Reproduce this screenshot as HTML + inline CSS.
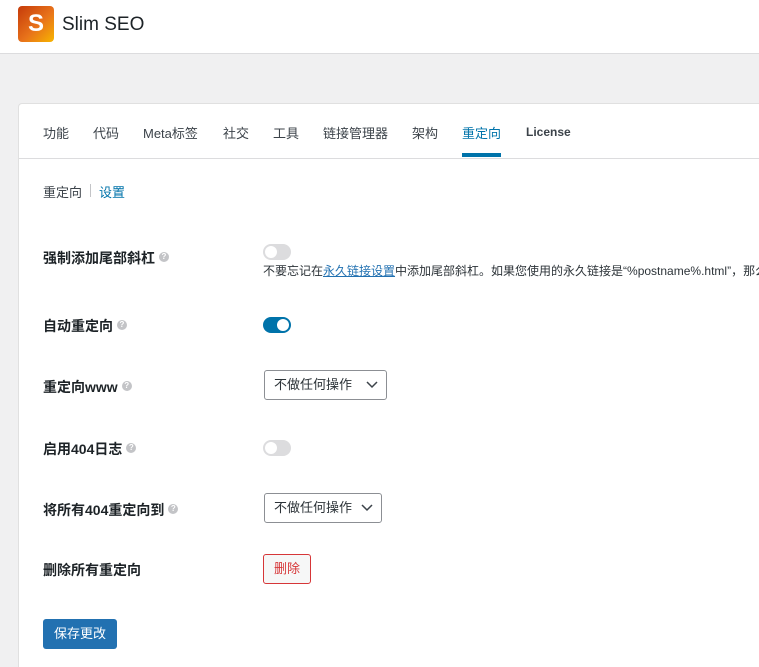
<!DOCTYPE html><html><head><meta charset="utf-8"><style>
*{margin:0;padding:0;box-sizing:border-box}
html,body{width:759px;height:667px;overflow:hidden}
body{background:#f0f0f1;font-family:"Liberation Sans","Noto Sans CJK SC",sans-serif;color:#1d2327;font-size:13px;position:relative}
.a{position:absolute;white-space:nowrap}
.hdr{left:0;top:0;width:759px;height:54px;background:#fff;border-bottom:1px solid #dcdcde}
.logo{left:18px;top:6px;width:36px;height:36px;border-radius:4px;background:linear-gradient(135deg,#c53a0a,#e8731a 55%,#f7b500);color:#fff;font-weight:bold;font-size:24px;text-align:center;line-height:36px}
.card{left:18px;top:103px;width:741px;height:564px;background:#fff;border:1px solid #e0e0e0;border-bottom:none;border-right:none;border-radius:4px 0 0 0}
.tab{top:123px;font-size:13px;color:#3c434a}
.lbl{left:43px;font-weight:bold;font-size:14px;color:#1d2327}
.q{display:inline-block;width:10px;height:10px;border-radius:50%;background:#c3c4c7;color:#fff;font-size:8px;text-align:center;line-height:10px;vertical-align:4px;margin-left:4px}
.tg{width:28px;height:16px;border-radius:8px;background:#dcdcde}
.tg::after{content:"";position:absolute;top:2px;left:2px;width:12px;height:12px;border-radius:50%;background:#fff}
.tg.on{background:#0073aa}.tg.on::after{left:14px}
.sel{height:30px;border:1px solid #8c8f94;border-radius:3px;padding:0 0 0 9px;line-height:28px;font-size:13px;color:#2c3338;background:#fff}
.sel svg{position:absolute;right:8px;top:10px}
</style></head><body>
<div class="a hdr"></div>
<div class="a logo">S</div>
<div class="a" style="left:62px;top:14px;font-size:19px;color:#1d2327">Slim SEO</div>
<div class="a card"></div>
<div class="a tab" style="left:43px">功能</div>
<div class="a tab" style="left:93px">代码</div>
<div class="a tab" style="left:143px">Meta标签</div>
<div class="a tab" style="left:223px">社交</div>
<div class="a tab" style="left:273px">工具</div>
<div class="a tab" style="left:323px">链接管理器</div>
<div class="a tab" style="left:412px">架构</div>
<div class="a tab" style="left:462px;color:#0073aa">重定向</div>
<div class="a tab" style="left:526px;font-weight:bold;font-size:12px;top:125px">License</div>
<div class="a" style="left:462px;top:153px;width:39px;height:4px;background:#0073aa"></div>
<div class="a" style="left:19px;top:158px;width:740px;height:1px;background:#dcdcde"></div>
<div class="a" style="left:43px;top:182px;color:#3c434a">重定向</div>
<div class="a" style="left:90px;top:184px;width:1px;height:13px;background:#c3c4c7"></div>
<div class="a" style="left:99px;top:182px;color:#0073aa">设置</div>
<div class="a lbl" style="top:248px">强制添加尾部斜杠<span class="q">?</span></div>
<div class="a tg" style="left:263px;top:244px"></div>
<div class="a" style="left:263px;top:262px;font-size:12px;color:#2c3338">不要忘记在<span style="color:#2271b1;text-decoration:underline">永久链接设置</span>中添加尾部斜杠。如果您使用的永久链接是“%postname%.html”，那么只</div>
<div class="a lbl" style="top:316px">自动重定向<span class="q">?</span></div>
<div class="a tg on" style="left:263px;top:317px"></div>
<div class="a lbl" style="top:377px">重定向www<span class="q">?</span></div>
<div class="a sel" style="left:264px;top:370px;width:123px">不做任何操作<svg width="12" height="8"><path d="M1 1l5 5 5-5" stroke="#3c434a" stroke-width="1.5" fill="none"/></svg></div>
<div class="a lbl" style="top:439px">启用404日志<span class="q">?</span></div>
<div class="a tg" style="left:263px;top:440px"></div>
<div class="a lbl" style="top:500px">将所有404重定向到<span class="q">?</span></div>
<div class="a sel" style="left:264px;top:493px;width:118px">不做任何操作<svg width="12" height="8"><path d="M1 1l5 5 5-5" stroke="#3c434a" stroke-width="1.5" fill="none"/></svg></div>
<div class="a lbl" style="top:560px">删除所有重定向</div>
<div class="a" style="left:263px;top:554px;width:48px;height:30px;border:1px solid #d63638;border-radius:3px;background:#f6f7f7;color:#d63638;text-align:center;line-height:28px">删除</div>
<div class="a" style="left:43px;top:619px;width:74px;height:30px;border-radius:3px;background:#2271b1;color:#fff;text-align:center;line-height:30px">保存更改</div>
</body></html>
